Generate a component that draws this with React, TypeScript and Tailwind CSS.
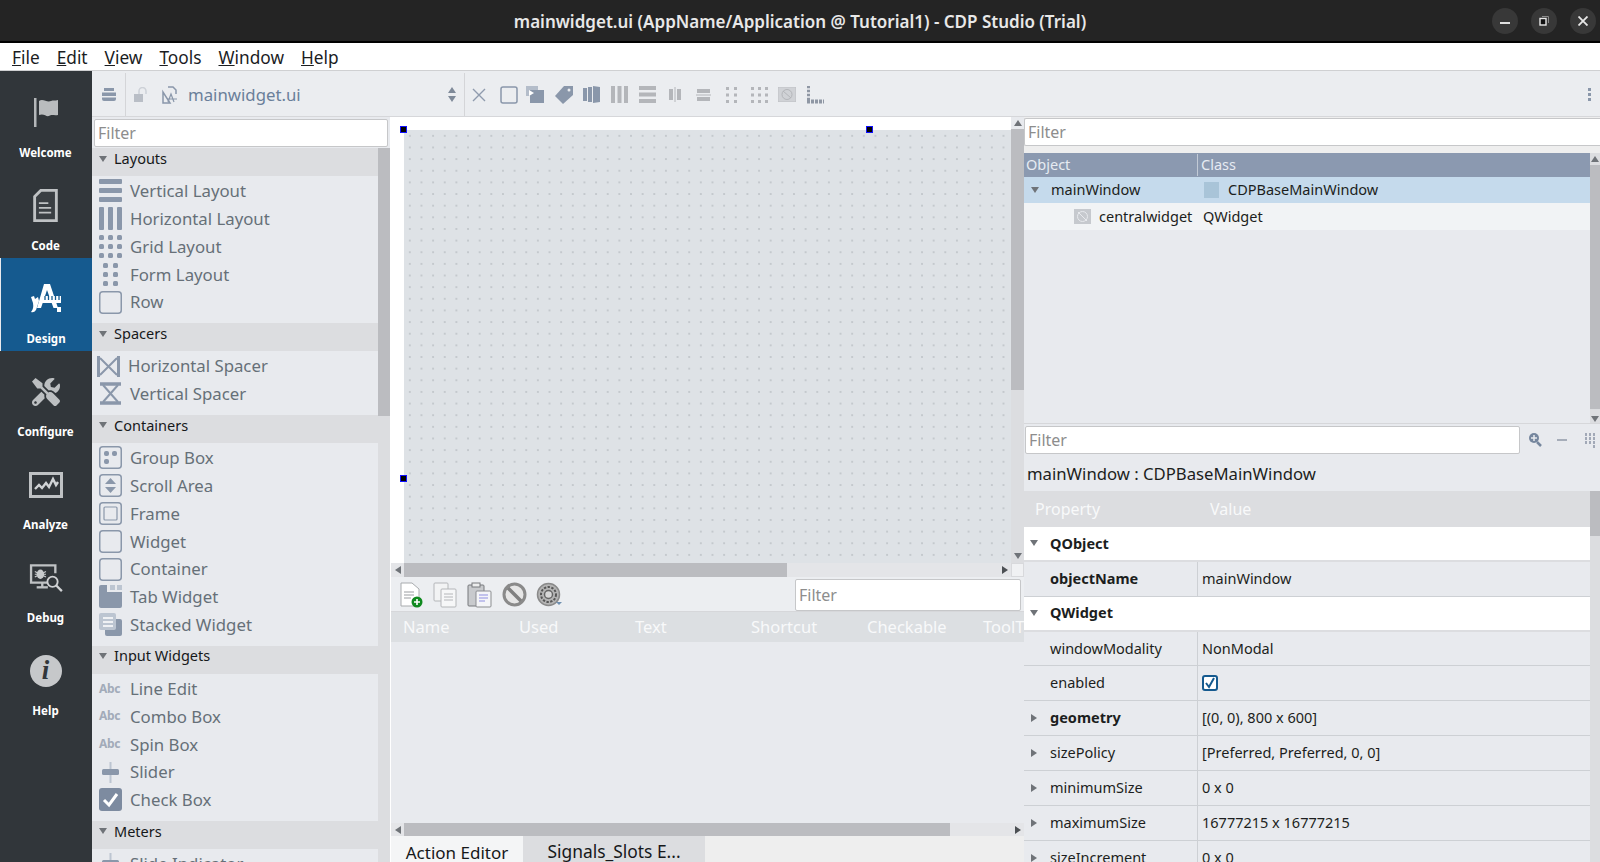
import React from 'react';
import { FaTools } from 'react-icons/fa';

const Tri = ({ dir = 'down', className = 'fill-[#6f7378]' }: { dir?: 'down' | 'up' | 'left' | 'right'; className?: string }) => {
  const pts = { down: '0,1 8,1 4,7', up: '0,7 8,7 4,1', left: '7,0 7,8 1,4', right: '1,0 1,8 7,4' }[dir];
  return (
    <svg width="8" height="8" viewBox="0 0 8 8" className={`shrink-0 ${className}`}>
      <polygon points={pts} />
    </svg>
  );
};

const SL = '#8a97aa';

const Ico = ({ children, size = 23 }: { children: React.ReactNode; size?: number }) => (
  <svg width={size} height={size} viewBox="0 0 23 23" className="shrink-0">{children}</svg>
);

const Bars = ({ c = SL }: { c?: string }) => (
  <Ico><rect x="0" y="0" width="23" height="5" rx="1" fill={c} /><rect x="0" y="9" width="23" height="5" rx="1" fill={c} /><rect x="0" y="18" width="23" height="5" rx="1" fill={c} /></Ico>
);
const Cols = ({ c = SL }: { c?: string }) => (
  <Ico><rect x="0" y="0" width="5" height="23" rx="1" fill={c} /><rect x="9" y="0" width="5" height="23" rx="1" fill={c} /><rect x="18" y="0" width="5" height="23" rx="1" fill={c} /></Ico>
);
const Dots = ({ xs, ys, c = SL }: { xs: number[]; ys: number[]; c?: string }) => (
  <Ico>{xs.map((x) => ys.map((y) => <rect key={`${x}-${y}`} x={x} y={y} width="5" height="5" rx="1.5" fill={c} />))}</Ico>
);
const Box = ({ children }: { children?: React.ReactNode }) => (
  <Ico><rect x="0.75" y="0.75" width="21.5" height="21.5" rx="3" fill="none" stroke={SL} strokeWidth="1.5" />{children}</Ico>
);
const Abc = () => <span className="w-[23px] shrink-0 text-[12px] font-bold leading-none tracking-[-0.3px] text-[#a2abb9]">Abc</span>;

const palette: { title: string; items: [string, React.ReactNode][] }[] = [
  {
    title: 'Layouts',
    items: [
      ['Vertical Layout', <Bars />],
      ['Horizontal Layout', <Cols />],
      ['Grid Layout', <Dots xs={[0, 9, 18]} ys={[0, 9, 18]} />],
      ['Form Layout', <Dots xs={[4, 14]} ys={[0, 9, 18]} />],
      ['Row', <Box />],
    ],
  },
  {
    title: 'Spacers',
    items: [
      ['Horizontal Spacer', <Ico><path d="M1.5 1 V22 M21.5 1 V22" stroke={SL} strokeWidth="3" /><path d="M3 3 L20 20 M20 3 L3 20" stroke={SL} strokeWidth="2" /></Ico>],
      ['Vertical Spacer', <Ico><path d="M1 2 H22 M1 21 H22" stroke={SL} strokeWidth="3.5" /><path d="M4 3 L19 20 M19 3 L4 20" stroke={SL} strokeWidth="2" /></Ico>],
    ],
  },
  {
    title: 'Containers',
    items: [
      ['Group Box', <Box><rect x="5" y="5" width="5" height="5" rx="2" fill={SL} /><rect x="13" y="5" width="5" height="5" rx="2" fill={SL} /><rect x="5" y="13" width="5" height="5" rx="2" fill={SL} /></Box>],
      ['Scroll Area', <Box><polygon points="11.5,4 17,10 6,10" fill={SL} /><polygon points="11.5,19 17,13 6,13" fill={SL} /></Box>],
      ['Frame', <Box><rect x="5" y="5" width="13" height="13" rx="1" fill="none" stroke={SL} strokeWidth="1.2" /></Box>],
      ['Widget', <Box />],
      ['Container', <Box />],
      ['Tab Widget', <Ico><path d="M2 0 H8 V7 H23 V21 a2 2 0 0 1 -2 2 H2 a2 2 0 0 1 -2 -2 V2 a2 2 0 0 1 2 -2Z" fill={SL} /><rect x="11" y="0" width="5" height="5" fill="#bcc5d1" /><rect x="18" y="0" width="5" height="5" fill="#bcc5d1" /></Ico>],
      ['Stacked Widget', <Ico><rect x="6" y="6" width="17" height="17" rx="2" fill={SL} /><rect x="0" y="0" width="17" height="17" rx="2" fill="#bcc5d1" /><path d="M4 5 H14 M4 9 H14 M4 13 H14" stroke="#fff" strokeWidth="1.5" /></Ico>],
    ],
  },
  {
    title: 'Input Widgets',
    items: [
      ['Line Edit', <Abc />],
      ['Combo Box', <Abc />],
      ['Spin Box', <Abc />],
      ['Slider', <Ico><path d="M11.5 1 V22" stroke="#bcc5d1" strokeWidth="2" /><rect x="3" y="8" width="17" height="6" rx="1.5" fill={SL} /></Ico>],
      ['Check Box', <Ico><rect x="0" y="0" width="23" height="23" rx="3" fill="#7d8ba0" /><path d="M5 12 L10 17 L18 6" fill="none" stroke="#fff" strokeWidth="3" /></Ico>],
    ],
  },
  {
    title: 'Meters',
    items: [['Slide Indicator', <Ico><path d="M11.5 1 V22" stroke="#bcc5d1" strokeWidth="2" /><rect x="3" y="8" width="17" height="6" rx="1.5" fill={SL} /></Ico>]],
  },
];

const FilterBox = ({ className = '' }: { className?: string }) => (
  <div className={`flex items-center rounded-[2px] border border-[#c6c7c9] bg-white pl-[3px] text-[16px] text-[#8d8d8d] ${className}`}>Filter</div>
);

const sideItems: [string, React.ReactNode][] = [
  ['Welcome', <svg width="26" height="30" viewBox="0 0 26 30"><rect x="1" y="0" width="2.5" height="29" fill="#b4b7b9" /><path d="M6 3 C10 0 14 5 18 3 C20 2 22 3 25 2 V17 C21 18 19 16 16 18 C13 19 11 15 6 17Z" fill="#b9bcbe" /></svg>],
  ['Code', <svg width="25" height="34" viewBox="0 0 26 36"><path d="M8 1.5 H24.5 V33.5 H1.5 V8 Z" fill="#3a3f43" stroke="#bfc2c4" strokeWidth="3" /><path d="M6 15 H16 M6 20 H19 M6 25 H19" stroke="#bfc2c4" strokeWidth="2" /></svg>],
  ['Design', <svg width="32" height="32" viewBox="0 0 32 32"><path d="M14 1 H20 L28 25 H23.5 L17 7 L11 25 H7 Z" fill="#fff" /><rect x="12" y="13" width="19" height="7" fill="#fff" /><path d="M15 13 V17 M18.5 13 V17 M22 13 V17 M25.5 13 V17 M29 13 V17" stroke="#155a8f" strokeWidth="1.3" /><path d="M1 14 L4 13 L5 16 L8 14 L9 18 L6 27 Q4 30 1 29 Q4 26 3 20Z" fill="#fff" /><rect x="27" y="24" width="4" height="5" fill="#fff" /></svg>],
  ['Configure', <FaTools size={28} className="text-[#bcbfc1]" />],
  ['Analyze', <svg width="34" height="26" viewBox="0 0 34 26"><rect x="1.5" y="1.5" width="31" height="23" fill="none" stroke="#bfc2c4" strokeWidth="3" /><path d="M6 17 L10 13 L13 16 L17 11 L20 15 L24 7 L27 13 L29 10" fill="none" stroke="#d0d3d5" strokeWidth="2.4" /></svg>],
  ['Debug', <svg width="34" height="28" viewBox="0 0 36 30"><path d="M22 20 H2 V1.5 H28 V10" fill="none" stroke="#bfc2c4" strokeWidth="2.5" /><path d="M8 25 H20" stroke="#bfc2c4" strokeWidth="2.5" /><path d="M14 20 V25" stroke="#bfc2c4" strokeWidth="2.5" /><ellipse cx="12" cy="11" rx="4" ry="5" fill="#c8cbcd" /><path d="M6 8 L18 14 M18 8 L6 14 M6 11 H18" stroke="#c8cbcd" strokeWidth="1.2" /><circle cx="25" cy="19" r="5.5" fill="#31363a" stroke="#d0d2d4" strokeWidth="2" /><path d="M29 23 L35 29" stroke="#d0d2d4" strokeWidth="2.5" /></svg>],
];

const SideButton = ({ label, icon, active }: { label: string; icon: React.ReactNode; active?: boolean }) => (
  <div className={`flex h-[93px] w-full flex-col items-center pr-[1px] text-white ${active ? 'bg-[#155a8f] border-l border-[#e8eaee]' : ''}`}>
    <div className="flex h-[81px] items-center justify-center">{icon}</div>
    <div className="mt-[-8px] text-[11.5px] font-bold leading-[16px]">{label}</div>
  </div>
);

const Sidebar = () => (
  <div className="flex w-[92px] shrink-0 flex-col bg-[#31363a]">
    <div className="h-px shrink-0" />
    {sideItems.map(([l, i]) => <SideButton key={l} label={l} icon={i} active={l === 'Design'} />)}
    <SideButton
      label="Help"
      icon={<div className="flex h-8 w-8 items-center justify-center rounded-full bg-[#c6c8ca] font-['Liberation_Serif',serif] text-[27px] font-bold italic leading-none text-[#31363a]">i</div>}
    />
  </div>
);

const tbGray = '#b4b6ba';
const toolIcons: React.ReactNode[] = [
  <svg width="14" height="14" viewBox="0 0 14 14"><path d="M1 1 L13 13 M13 1 L1 13" stroke="#8f9bad" strokeWidth="1.4" /></svg>,
  <svg width="18" height="18" viewBox="0 0 18 18" className="ml-[3px]"><rect x="1" y="1" width="16" height="16" rx="2" fill="none" stroke={SL} strokeWidth="1.5" /></svg>,
  <svg width="18" height="17" viewBox="0 0 18 17"><rect x="0" y="0" width="12" height="10" fill="#b4bdca" /><rect x="4" y="4" width="14" height="13" fill={SL} /><polygon points="3,4 8,7 3,10" fill="#fff" /></svg>,
  <svg width="18" height="18" viewBox="0 0 18 18" className="ml-[2px]"><path d="M9 0 H18 V9 L8 18 L0 10Z" fill={SL} /><circle cx="14" cy="4" r="1.5" fill="#ebedf0" /></svg>,
  <svg width="17" height="17" viewBox="0 0 17 17"><rect x="0" y="2" width="4" height="13" fill={SL} /><rect x="5" y="1" width="4" height="15" fill={SL} /><path d="M10 0 L17 1 V16 L10 17Z" fill={SL} /></svg>,
  <svg width="17" height="17" viewBox="0 0 17 17"><rect x="0" y="0" width="4" height="17" fill={tbGray} /><rect x="6.5" y="0" width="4" height="17" fill={tbGray} /><rect x="13" y="0" width="4" height="17" fill={tbGray} /></svg>,
  <svg width="17" height="17" viewBox="0 0 17 17"><rect x="0" y="0" width="17" height="4" fill={tbGray} /><rect x="0" y="6.5" width="17" height="4" fill={tbGray} /><rect x="0" y="13" width="17" height="4" fill={tbGray} /></svg>,
  <svg width="12" height="15" viewBox="0 0 12 15"><rect x="0" y="2" width="4" height="11" fill={tbGray} /><rect x="8" y="2" width="4" height="11" fill={tbGray} /><path d="M6 0 V15" stroke={tbGray} /></svg>,
  <svg width="15" height="12" viewBox="0 0 15 12"><rect x="1" y="0" width="13" height="4" fill={tbGray} /><rect x="1" y="8" width="13" height="4" fill={tbGray} /><path d="M0 6 H15" stroke={tbGray} /></svg>,
  <svg width="11" height="16" viewBox="0 0 11 16">{[0, 6.5, 13].map((y) => [0, 8].map((x) => <rect key={`${x}${y}`} x={x} y={y} width="3" height="3" fill={tbGray} />))}</svg>,
  <svg width="17" height="16" viewBox="0 0 17 16">{[0, 6.5, 13].map((y) => [0, 7, 14].map((x) => <rect key={`${x}${y}`} x={x} y={y} width="3" height="3" fill={tbGray} />))}</svg>,
  <svg width="18" height="15" viewBox="0 0 18 15"><rect x="0" y="0" width="18" height="15" fill="#d0d2d6" stroke="#bfc1c5" /><circle cx="9" cy="7.5" r="5" fill="none" stroke={tbGray} /><path d="M5 4 L13 11" stroke={tbGray} /></svg>,
  <svg width="18" height="18" viewBox="0 0 18 18"><path d="M1 1 H4 M1 5 H4 M1 9 H4 M1 13 H4" stroke="#8f97a4" strokeWidth="2.4" /><path d="M1 15.5 H18" stroke="#8f97a4" strokeWidth="4" strokeDasharray="3 1" /></svg>,
];

const TopToolbar = () => (
  <div className="flex h-[46px] shrink-0 items-center border-b border-[#d6d7da] bg-[#ebedf0] pt-[2px]">
    <div className="flex h-full w-[34px] items-center justify-center border-r border-[#d4d5d8]">
      <svg width="14" height="13" viewBox="0 0 14 13"><path d="M2 0 H12 V3 H2Z M0 4.5 H14 V8 H0Z M0 9.5 H14 V11 Q14 13 12 13 H2 Q0 13 0 11Z" fill={SL} /></svg>
    </div>
    <div className="ml-[8px]">
      <svg width="15" height="15" viewBox="0 0 15 15"><rect x="0" y="7" width="9" height="8" fill="#b9bec6" /><path d="M5 7 V4 a3.5 3.5 0 0 1 7 0 V7" fill="none" stroke="#cdd1d7" strokeWidth="1.5" /></svg>
    </div>
    <div className="ml-[13px]">
      <svg width="16" height="18" viewBox="0 0 16 18"><path d="M6 1 H11 L14 4 V8 M8 17 H1 V6Z" fill="none" stroke={SL} strokeWidth="1.5" /><path d="M6 16 L9 8 L12 16 M5 13 H15" fill="none" stroke={SL} strokeWidth="1.2" /></svg>
    </div>
    <span className="ml-[10px] w-[260px] text-[16.8px] text-[#6a7f9a]">mainwidget.ui</span>
    <div className="flex flex-col gap-[1px]"><Tri dir="up" className="fill-[#7f8a99]" /><Tri dir="down" className="fill-[#7f8a99]" /></div>
    <div className="ml-[8px] flex h-full items-center border-l border-[#d4d5d8]">
      {toolIcons.map((ic, i) => <div key={i} className="flex w-[28px] items-center justify-center">{ic}</div>)}
    </div>
    <div className="ml-auto mr-[9px] flex flex-col gap-[2px]">
      <span className="h-[3px] w-[3px] bg-[#8a97aa]" /><span className="h-[3px] w-[3px] bg-[#8a97aa]" /><span className="h-[3px] w-[3px] bg-[#8a97aa]" />
    </div>
  </div>
);

const LeftPanel = () => (
  <div className="flex w-[299px] shrink-0 flex-col border-r border-white bg-[#e8eaee]">
    <div className="h-[31px] shrink-0 pl-[2px] pr-[2px] pt-[2px]"><FilterBox className="h-[28px]" /></div>
    <div className="flex min-h-0 flex-1">
      <div className="min-w-0 flex-1 overflow-hidden">
        {palette.map((sec) => (
          <div key={sec.title}>
            <div className="flex h-[28px] items-center gap-[7px] bg-[#dcdde0] pb-[7px] pl-[7px] text-[14.5px] text-[#16181a]">
              <Tri />
              <span>{sec.title}</span>
            </div>
            <div className="pb-[7.2px] pt-[1px]">
              {sec.items.map(([label, icon]) => (
                <div key={label} className={`flex h-[27.8px] items-center gap-[8px] text-[16.8px] text-[#667078] ${label === 'Horizontal Spacer' ? 'pl-[5px]' : 'pl-[7px]'}`}>
                  {icon}
                  <span className="whitespace-nowrap">{label}</span>
                </div>
              ))}
            </div>
          </div>
        ))}
      </div>
      <div className="flex w-[12px] shrink-0 flex-col bg-[#dcdde0]">
        <div className="h-[268px] bg-[#bbbcc0]" />
      </div>
    </div>
  </div>
);

const HScroll = ({ thumb, height = 14, last = false }: { thumb: string; height?: number; last?: boolean }) => (
  <div className="flex shrink-0 items-center bg-[#e4e5e8]" style={{ height }}>
    <div className="flex h-full w-[13px] shrink-0 items-center justify-center"><Tri dir="left" /></div>
    <div className={`h-full ${thumb} bg-[#bbbcc0]`} />
    <div className="flex-1" />
    <div className="flex h-full w-[12px] shrink-0 items-center justify-center"><Tri dir="right" className="fill-[#4c5054]" /></div>
    {last && <div className="h-full w-[13px] border border-[#d8d9dc] bg-[#f0f1f3]" />}
  </div>
);

const Handle = ({ className }: { className: string }) => (
  <div className={`absolute h-[7px] w-[7px] border border-[#1010ff] bg-black ${className}`} />
);

const Canvas = () => (
  <div className="flex h-[446px] shrink-0">
    <div className="relative min-w-0 flex-1 bg-white pl-[13px] pt-[13px]">
      <div className="h-full w-full bg-[#dee2e6] bg-[radial-gradient(circle,#9aa0a5_0.5px,transparent_0.8px)] bg-[length:11.65px_11.65px]" />
      <Handle className="left-[9px] top-[9px]" />
      <Handle className="left-[475px] top-[9px]" />
      <Handle className="left-[9px] top-[358px]" />
    </div>
    <div className="flex w-[13px] shrink-0 flex-col items-center bg-[#dcdde0]">
      <div className="flex h-[12px] w-full shrink-0 items-center justify-center bg-[#e8eaee]"><Tri dir="up" /></div>
      <div className="h-[261px] w-full shrink-0 bg-[#bbbcc0]" />
      <div className="flex-1" />
      <div className="flex h-[14px] w-full shrink-0 items-center justify-center"><Tri dir="down" /></div>
    </div>
  </div>
);

const actionIcons = (
  <div className="flex items-center gap-[9.5px] pl-[7px]">
    <svg width="25" height="26" viewBox="0 0 25 26"><path d="M3 1 H14 L21 7 V24 H3Z" fill="#fff" stroke="#a8abae" /><path d="M6 10 H16 M6 13 H16 M6 16 H13" stroke="#9a9da1" /><circle cx="19" cy="20" r="5.5" fill="#0f8a1f" /><path d="M19 17 V23 M16 20 H22" stroke="#fff" strokeWidth="1.6" /></svg>
    <svg width="25" height="26" viewBox="0 0 25 26"><rect x="1" y="1" width="14" height="18" rx="1" fill="#f2f3f4" stroke="#b4b6b9" /><rect x="8" y="7" width="15" height="18" rx="1" fill="#f6f7f8" stroke="#b4b6b9" /><path d="M11 12 H20 M11 15 H20 M11 18 H20" stroke="#b4b6b9" /></svg>
    <svg width="25" height="26" viewBox="0 0 25 26"><rect x="1" y="3" width="16" height="21" rx="1" fill="#c8cacd" stroke="#77797c" /><rect x="5" y="1" width="8" height="4" fill="#eceded" stroke="#77797c" /><rect x="9" y="9" width="15" height="16" rx="1" fill="#f4f5f8" stroke="#8b8d90" /><path d="M12 13 H21 M12 16 H21 M12 19 H18" stroke="#8f8fe0" /></svg>
    <svg width="25" height="25" viewBox="0 0 25 25"><circle cx="12.5" cy="12.5" r="10.5" fill="#e6e6e6" stroke="#8a8a8a" strokeWidth="3" /><path d="M6 6 L19 19" stroke="#808080" strokeWidth="3.6" /></svg>
    <svg width="26" height="25" viewBox="0 0 26 25"><circle cx="12.5" cy="12.5" r="11" fill="#b4b4b4" stroke="#8a8a8a" strokeWidth="1.5" /><circle cx="12.5" cy="12.5" r="7.5" fill="none" stroke="#555" strokeWidth="2" strokeDasharray="2.4 1.4" /><circle cx="12.5" cy="12.5" r="4" fill="#d8d8d8" stroke="#666" strokeWidth="1.5" /><polygon points="20,20 26,20 23,23" fill="#6f8fb0" /></svg>
  </div>
);

const CenterPanel = () => (
  <div className="flex w-[633px] shrink-0 flex-col bg-[#e8eaee]">
    <Canvas />
    <HScroll thumb="w-[383px]" last />
    <div className="flex h-[35px] shrink-0 items-center justify-between border-b border-[#d6d7da] bg-[#eceef1] pr-[3px] pt-[1px]">
      {actionIcons}
      <FilterBox className="h-[32px] w-[226px]" />
    </div>
    <div className="flex h-[30px] shrink-0 items-center overflow-hidden bg-[#dcdfe2] pl-[12px] text-[16.5px] text-[#f8f9fa]">
      {['Name', 'Used', 'Text', 'Shortcut', 'Checkable', 'ToolT'].map((h) => <span key={h} className="w-[116px] shrink-0">{h}</span>)}
    </div>
    <div className="flex-1" />
    <HScroll thumb="w-[546px]" height={13} />
    <div className="flex h-[26px] shrink-0 items-end bg-[#eeeeee] text-[17px] text-[#16181a]">
      <div className="flex h-[26px] w-[132px] items-center justify-center bg-[#f4f5f6] pt-[7px]">Action Editor</div>
      <div className="flex h-[26px] w-[182px] items-center justify-center bg-[#dcdde0] pt-[4px] text-[17.4px]">Signals_Slots E...</div>
    </div>
  </div>
);

const props: { name: string; value?: React.ReactNode; bold?: boolean; arrow?: boolean; group?: boolean }[] = [
  { name: 'QObject', group: true },
  { name: 'objectName', value: 'mainWindow', bold: true },
  { name: 'QWidget', group: true },
  { name: 'windowModality', value: 'NonModal' },
  {
    name: 'enabled',
    value: (
      <div className="flex h-[16px] w-[16px] items-center justify-center rounded-[3px] border-2 border-[#155a8f] bg-white">
        <svg width="12" height="12" viewBox="0 0 12 12"><path d="M2 6 L5 10 L10 1" fill="none" stroke="#155a8f" strokeWidth="2" /></svg>
      </div>
    ),
  },
  { name: 'geometry', value: '[(0, 0), 800 x 600]', bold: true, arrow: true },
  { name: 'sizePolicy', value: '[Preferred, Preferred, 0, 0]', arrow: true },
  { name: 'minimumSize', value: '0 x 0', arrow: true },
  { name: 'maximumSize', value: '16777215 x 16777215', arrow: true },
  { name: 'sizeIncrement', value: '0 x 0', arrow: true },
];

const RightPanel = () => (
  <div className="flex min-w-0 flex-1 flex-col bg-[#eeeeee] text-[14.5px] text-[#1c1e20]">
    <div className="h-[36px] shrink-0 pt-[1px]"><FilterBox className="h-[28px] rounded-r-none border-r-0 pl-[2px]" /></div>
    <div className="flex h-[270px] shrink-0">
      <div className="flex min-w-0 flex-1 flex-col bg-[#e8eaee]">
        <div className="flex h-[24px] shrink-0 items-center bg-[#8b99b0] text-[#e6ebf2]">
          <span className="w-[174px] border-r border-[#c2cad6] pl-[2px]">Object</span>
          <span className="pl-[3px]">Class</span>
        </div>
        <div className="flex h-[26px] shrink-0 items-center bg-[#c5daec]">
          <div className="flex w-[174px] items-center pl-[7px]"><Tri /><span className="ml-[12px]">mainWindow</span></div>
          <span className="ml-[6px] h-[16px] w-[15px] bg-[#a9c4d8]" />
          <span className="ml-[9px]">CDPBaseMainWindow</span>
        </div>
        <div className="flex h-[27px] shrink-0 items-center bg-[#f1f3f5]">
          <div className="flex w-[174px] items-center pl-[50px]">
            <svg width="17" height="15" viewBox="0 0 17 15" className="shrink-0"><rect width="17" height="15" fill="#c6c9ce" /><circle cx="8.5" cy="7.5" r="5" fill="none" stroke="#e8eaee" /><path d="M4 3 L13 12" stroke="#e8eaee" /></svg>
            <span className="ml-[8px]">centralwidget</span>
          </div>
          <span className="ml-[5px]">QWidget</span>
        </div>
      </div>
      <div className="flex w-[10px] shrink-0 flex-col items-center bg-[#dcdde0]">
        <Tri dir="up" className="mt-[2px] fill-[#6f7378]" />
        <div className="mt-[2px] h-[244px] w-full bg-[#bbbcc0]" />
        <Tri dir="down" className="mt-auto fill-[#6f7378]" />
      </div>
    </div>
    <div className="flex h-[33px] shrink-0 items-center border-t border-[#d6d7da] bg-[#e8eaee] pl-[1px]">
      <FilterBox className="h-[28px] w-[495px] shrink-0" />
      <svg width="16" height="17" viewBox="0 0 16 17" className="ml-[8px] shrink-0"><circle cx="6" cy="6" r="5" fill="#76879e" /><path d="M6 3 V9 M3 6 H9" stroke="#e8eaee" strokeWidth="1.5" /><path d="M9 10 L13 14" stroke="#76879e" strokeWidth="2.5" /></svg>
      <span className="ml-[13px] h-[2px] w-[10px] shrink-0 bg-[#a6adb9]" />
      <svg width="14" height="15" viewBox="0 0 14 15" className="ml-[17px] shrink-0"><path d="M2 0 V12 M6 0 V12 M10 0 V15" stroke="#8a94a5" strokeWidth="1.5" strokeDasharray="3 1" /></svg>
    </div>
    <div className="flex h-[35px] shrink-0 items-center bg-[#e8eaee] pl-[3px] text-[16.7px]">mainWindow : CDPBaseMainWindow</div>
    <div className="flex min-h-0 flex-1 overflow-hidden">
      <div className="min-w-0 flex-1">
        <div className="flex h-[36px] items-center bg-[#dcdde0] text-[16px] text-[#f8f9fa]">
          <span className="w-[174px] pl-[11px]">Property</span>
          <span className="pl-[12px]">Value</span>
        </div>
        {props.map((p) =>
          p.group ? (
            <div key={p.name} className="flex h-[34.85px] items-center border-b-2 border-[#dcdde0] bg-white font-bold">
              <div className="flex w-[26px] justify-center pr-[6px]"><Tri /></div>
              <span>{p.name}</span>
            </div>
          ) : (
            <div key={p.name} className="flex h-[34.85px] items-center border-b border-[#cdd0d4] bg-[#e8eaee]">
              <div className="flex h-full w-[174px] shrink-0 items-center border-r border-[#cdd0d4]">
                <div className="flex w-[26px] justify-center pr-[6px]">{p.arrow && <Tri dir="right" />}</div>
                <span className={p.bold ? 'font-bold' : ''}>{p.name}</span>
              </div>
              <div className="pl-[4px]">{p.value}</div>
            </div>
          )
        )}
      </div>
      <div className="w-[10px] shrink-0 bg-[#dcdde0]"><div className="h-[45px] bg-[#bbbcc0]" /></div>
    </div>
  </div>
);

export default function App() {
  return (
    <div className="flex h-[862px] w-[1600px] flex-col overflow-hidden bg-[#e8eaee] font-['Noto_Sans',sans-serif]">
      <div className="relative flex h-[43px] shrink-0 items-center justify-center border-b-2 border-black bg-[#242424] pt-[2px] text-[17px] font-semibold text-[#e8e8e8]">
        mainwidget.ui (AppName/Application @ Tutorial1) - CDP Studio (Trial)
        <div className="absolute right-[4px] top-[8px] flex gap-[13px]">
          <div className="flex h-[26px] w-[26px] items-center justify-center rounded-full bg-[#383838]"><span className="mt-[4px] h-[2px] w-[10px] bg-[#e0e0e0]" /></div>
          <div className="flex h-[26px] w-[26px] items-center justify-center rounded-full bg-[#383838]">
            <svg width="10" height="10" viewBox="0 0 10 10"><path d="M3 0.5 H9.5 V7" fill="none" stroke="#8a8a8a" /><rect x="1" y="2.5" width="6" height="6.5" fill="#111" stroke="#e8e8e8" strokeWidth="1.4" /></svg>
          </div>
          <div className="flex h-[26px] w-[26px] items-center justify-center rounded-full bg-[#383838]">
            <svg width="10" height="10" viewBox="0 0 10 10"><path d="M0.5 0.5 L9.5 9.5 M9.5 0.5 L0.5 9.5" stroke="#e8e8e8" strokeWidth="1.8" /></svg>
          </div>
        </div>
      </div>
      <div className="flex h-[27px] shrink-0 items-center gap-[17px] bg-white pl-[12px] pt-[3px] text-[17.3px] text-[#1b1d1f]">
        <span><span className="underline">F</span>ile</span>
        <span><span className="underline">E</span>dit</span>
        <span><span className="underline">V</span>iew</span>
        <span><span className="underline">T</span>ools</span>
        <span><span className="underline">W</span>indow</span>
        <span><span className="underline">H</span>elp</span>
      </div>
      <div className="h-px shrink-0 bg-[#cfd0d2]" />
      <div className="flex min-h-0 flex-1">
        <Sidebar />
        <div className="flex min-w-0 flex-1 flex-col">
          <TopToolbar />
          <div className="flex min-h-0 flex-1">
            <LeftPanel />
            <CenterPanel />
            <RightPanel />
          </div>
        </div>
      </div>
    </div>
  );
}
